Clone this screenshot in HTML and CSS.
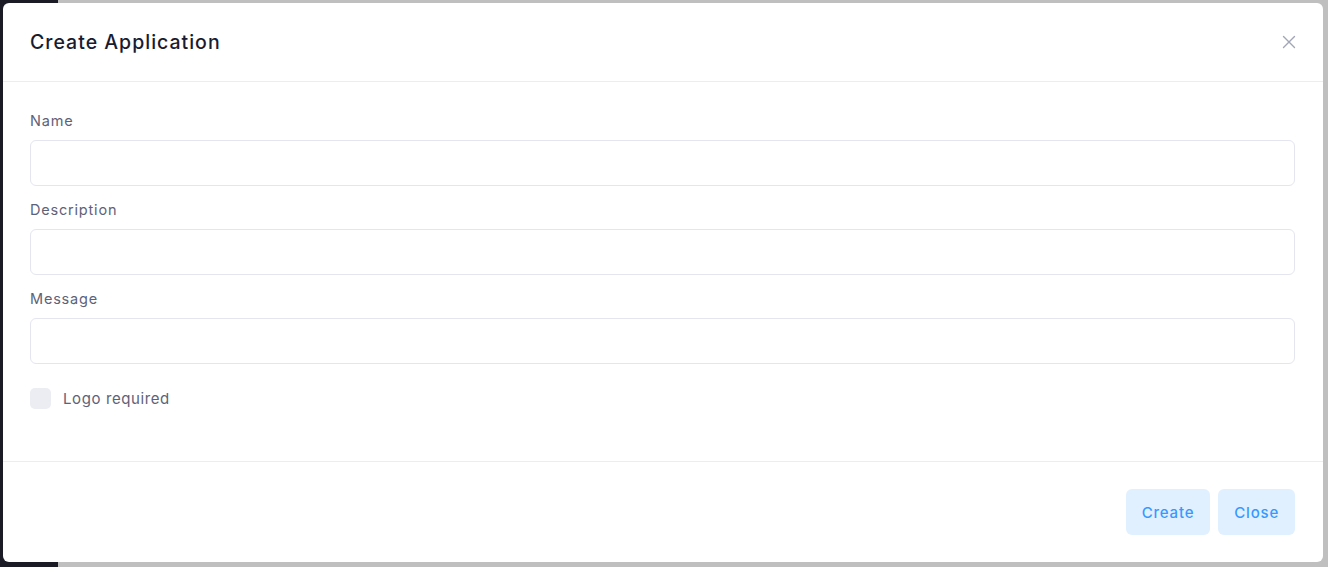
FILE: index.html
```html
<!DOCTYPE html>
<html>
<head>
<meta charset="utf-8">
<link rel="stylesheet" href="styles.css">
</head>
<body>
<div class="backdrop">
  <div class="modal">
    <div class="modal-header">
      <h3 class="modal-title">Create Application</h3>
      <button class="close-x" aria-label="Close">
        <svg width="14" height="14" viewBox="0 0 14 14"><path d="M1.5 1.5 L12.5 12.5 M12.5 1.5 L1.5 12.5" stroke="#a1a5b7" stroke-width="1.4" fill="none" stroke-linecap="round"/></svg>
      </button>
    </div>
    <div class="modal-body">
      <div class="field">
        <label class="label">Name</label>
        <input class="input" type="text">
      </div>
      <div class="field">
        <label class="label">Description</label>
        <input class="input" type="text">
      </div>
      <div class="field">
        <label class="label">Message</label>
        <input class="input" type="text">
      </div>
      <label class="check-row">
        <span class="checkbox"></span>
        <span class="check-label">Logo required</span>
      </label>
    </div>
    <div class="modal-footer">
      <button class="btn">Create</button>
      <button class="btn">Close</button>
    </div>
  </div>
</div>
</body>
</html>
```

FILE: styles.css
```css
* { box-sizing: border-box; }
html, body { margin: 0; height: 100%; }
body {
  font-family: "Inter", "Noto Sans", sans-serif;
  background: linear-gradient(to right, #1b1b26 0, #1b1b26 58px, #bfbfbf 58px);
  overflow: hidden;
}
.backdrop {
  height: 567px;
  padding: 3px 5px 5px 3px;
  display: flex;
}
.modal {
  flex: 1;
  background: #fff;
  border-radius: 6px;
  display: flex;
  flex-direction: column;
}
.modal-header {
  height: 79px;
  padding: 0 27px;
  display: flex;
  align-items: center;
  justify-content: space-between;
  border-bottom: 1px solid #ebedf3;
}
.modal-title {
  margin: 0;
  font-size: 19.5px;
  font-weight: 500;
  color: #181c32;
  letter-spacing: 1px;
}
.close-x {
  border: 0;
  background: none;
  padding: 0;
  width: 14px;
  height: 14px;
  display: flex;
}
.modal-body {
  flex: 1;
  padding: 28px 28px 0 27px;
  display: flex;
  flex-direction: column;
}
.field {
  display: flex;
  flex-direction: column;
  margin-bottom: 13px;
}
.label {
  font-size: 14.5px;
  line-height: 21px;
  color: #5e6278;
  letter-spacing: 0.8px;
  margin-bottom: 9px;
}
.input {
  height: 46px;
  border: 1px solid #e4e6ef;
  border-radius: 6px;
  background: #fff;
  outline: none;
}
.check-row {
  display: flex;
  align-items: center;
  gap: 12px;
  margin-top: 11px;
}
.checkbox {
  width: 21px;
  height: 21px;
  border-radius: 5px;
  background: #ebedf3;
}
.check-label {
  font-size: 15px;
  color: #5e6278;
  letter-spacing: 0.6px;
}
.modal-footer {
  height: 101px;
  border-top: 1px solid #ebedf3;
  display: flex;
  justify-content: flex-end;
  align-items: center;
  gap: 8px;
  padding: 0 28px 0 27px;
}
.btn {
  height: 46px;
  border: 0;
  border-radius: 6px;
  background: #e1f0ff;
  color: #3699ff;
  font-family: inherit;
  font-size: 15px;
  font-weight: 500;
  letter-spacing: 0.8px;
  padding: 0 16px;
}
```
